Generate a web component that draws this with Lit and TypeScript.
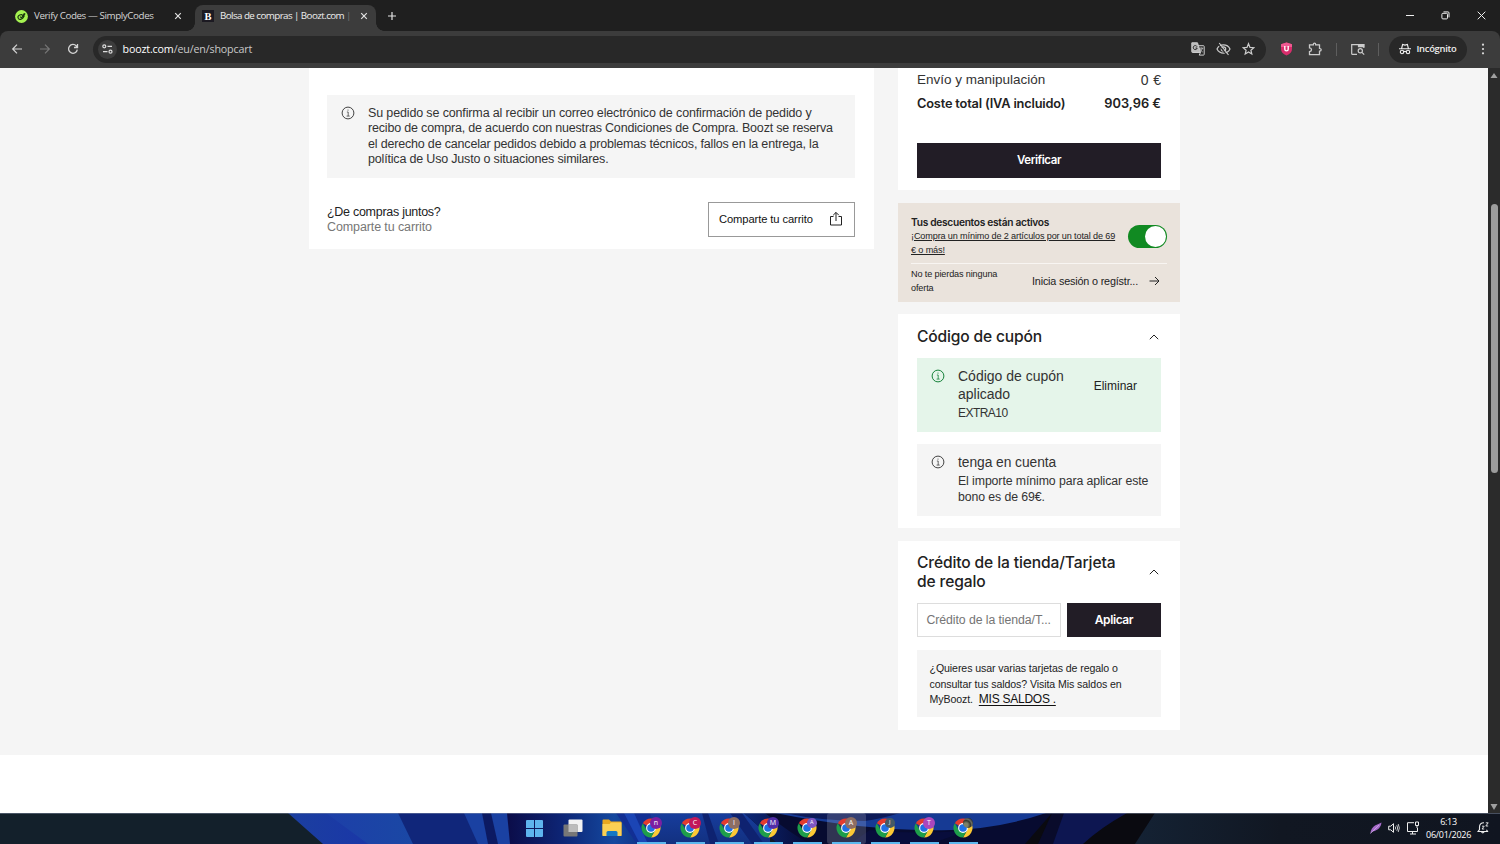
import { LitElement, html, css, svg } from "lit";
import { customElement } from "lit/decorators.js";
import { classMap } from "lit/directives/class-map.js";
import { styleMap } from "lit/directives/style-map.js";

const infoIcon = html`<svg class="info" width="14" height="14" viewBox="0 0 14 14" fill="none" stroke="currentColor"><circle cx="7" cy="7" r="5.900" stroke-width="1"/><path d="M5.900 6h1.300v4M5.600 10.100h3.100" stroke-width=".8"/><circle cx="7" cy="4" r=".6" fill="currentColor" stroke="none"/></svg>`;
const chevron = html`<svg width="10" height="6" viewBox="0 0 10 6" fill="none" stroke="#222" stroke-width="1"><path d="M.8 5.200 5 1l4.200 4.200"/></svg>`;
const closeIcon = html`<svg class="close" width="8" height="8" viewBox="0 0 8 8" fill="none" stroke="#e3e3e3" stroke-width="1.200"><path d="M1.200 1.200l5.600 5.600M6.800 1.200 1.200 6.800"/></svg>`;

interface PinnedApp { letter: string; color: string; small?: boolean; active?: boolean; }
const apps: PinnedApp[] = [
  { letter: "n", color: "#7b1fa2" },
  { letter: "C", color: "#c2185b" },
  { letter: "I", color: "#8d6e63" },
  { letter: "M", color: "#512da8" },
  { letter: "A", color: "#7e57c2", small: true },
  { letter: "A", color: "#8d6e63", active: true },
  { letter: "J", color: "#455a64", small: true },
  { letter: "T", color: "#ab47bc" },
  { letter: "", color: "radial-gradient(circle at 30% 70%, #7c8068 0 20%, #34372f 45%, #6b6f66 60%, #26282a 80%)", small: true },
];

@customElement("app-root")
export class AppRoot extends LitElement {
  static styles = css`
    * { box-sizing: border-box; }
    :host { display: flex; flex-direction: column; width: 1500px; height: 844px; overflow: hidden; font-family: "Liberation Sans", Arial, sans-serif; color: #222; }
    svg { display: block; flex: none; }
    .line { white-space: nowrap; display: block; }

    .tabs { height: 31px; flex: none; background: #1f1f1f; color: #d5d5d5; display: flex; font: 9.800px/14px "Open Sans", sans-serif; letter-spacing: -.41px; }
    .tab { width: 195px; padding: 1px 13px 0 15px; display: flex; align-items: center; }
    .tab .close { margin-left: auto; }
    .tab .line { margin-left: 6px; }
    .active-tab { position: relative; margin-top: 5px; height: 26px; padding: 0 8px 4px 7px; width: 181px; background: #3c3c3c; border-radius: 8px 8px 0 0; color: #eee; letter-spacing: -.57px; }
    .active-tab::before, .active-tab::after { content: ""; position: absolute; bottom: 0; width: 8px; height: 8px; }
    .active-tab::before { left: -8px; background: radial-gradient(circle at 0 0, transparent 7.500px, #3c3c3c 8px); }
    .active-tab::after { right: -8px; background: radial-gradient(circle at 100% 0, transparent 7.500px, #3c3c3c 8px); }
    .fade { color: #777; }
    .new-tab { align-self: center; margin: 1px 0 0 12px; }
    .window { margin-left: auto; display: flex; align-items: center; gap: 27px; padding-right: 14px; }

    .toolbar { height: 37px; flex: none; background: #3c3c3c; display: flex; align-items: center; padding: 0 13px 1px 11px; border-radius: 8px 8px 0 0; }
    .bar-wrap { background: #1f1f1f; flex: none; }
    .nav { display: flex; gap: 16px; }
    .omnibox { margin-left: 14px; width: 1173px; height: 27px; border-radius: 14px; background: #282828; display: flex; align-items: center; padding: 0 11.500px 0 4.500px; }
    .site { width: 19px; height: 19px; border-radius: 50%; background: #3c3c3c; display: grid; place-items: center; }
    .url { margin-left: 6px; font: 10.700px/14px "Open Sans", sans-serif; letter-spacing: -.15px; color: #c9c9c9; }
    .url b { font-weight: 400; color: #fff; }
    .omni-actions { margin-left: auto; display: flex; gap: 11px; }
    .shield { margin-left: 14px; }
    .puzzle { margin-left: 15px; }
    .sep { width: 1px; height: 13px; background: #5e5e5e; margin-left: 13.500px; }
    .side-search { margin-left: 14px; }
    .incognito { height: 27px; width: 78px; border-radius: 14px; background: #282828; margin-left: 9.500px; display: flex; align-items: center; gap: 6px; padding-left: 10px; font: 600 9.400px/14px "Open Sans", sans-serif; letter-spacing: -.28px; color: #eee; }
    .dots { margin-left: auto; }

    .view { height: 745px; flex: none; display: flex; background: #fff; }
    .page { width: 1488px; height: 687px; background: #f5f5f5; display: flex; align-items: flex-start; gap: 24px; padding-left: 309px; }
    .scroll { width: 12px; height: 745px; background: #2b2b2b; display: flex; flex-direction: column; align-items: center; padding: 5px 0 3px; }
    .thumb { width: 7px; height: 269px; border-radius: 4px; background: #9c9c9c; margin: 126px 0 auto; }

    .left { width: 565px; height: 181px; background: #fff; padding: 27px 19px 12px 18px; }
    .notice { height: 83px; background: #f5f5f5; display: flex; padding: 10.500px 0 0 13.500px; gap: 13.500px; color: #333; font-size: 12.500px; line-height: 15.600px; letter-spacing: -.18px; }
    .notice .line:first-child { letter-spacing: -.14px; }
    .notice .info { color: #444; }
    .share { display: flex; justify-content: space-between; margin-top: 24px; }
    .share-text { font-size: 12.500px; line-height: 15.500px; padding-top: 2.500px; letter-spacing: -.28px; }
    .muted { color: #777; letter-spacing: -.11px; }
    .share-btn { width: 147px; height: 35px; border: 1px solid #999; display: flex; align-items: center; justify-content: space-between; padding: 0 11px 1px 10px; font-size: 11.200px; letter-spacing: -.1px; color: #111; }

    .right { width: 282px; display: flex; flex-direction: column; gap: 13px; }
    .summary { height: 122px; background: #fff; padding: 0 19px; }
    .sum-row { display: flex; justify-content: space-between; line-height: 24px; height: 23.500px; font-size: 13.500px; color: #333; }
    .cost { font-size: 14px; letter-spacing: .4px; margin-right: -.4px; }
    .total { font: 600 12.800px/23px Inter, sans-serif; color: #222; }
    .total .line:first-child { letter-spacing: -.18px; }
    .dark { background: #221d26; color: #fff; display: grid; place-items: center; font: 600 11.500px/14px Inter, sans-serif; letter-spacing: -.4px; }
    .verify { height: 34.500px; margin-top: 28px; }

    .promo { height: 98.500px; background: #eae3dc; padding: 11.500px 13px 0; }
    .promo-top { display: flex; justify-content: space-between; height: 49px; border-bottom: 1px solid #f8f5f2; }
    .promo-title { font: 600 10.200px/14px Inter, sans-serif; letter-spacing: -.29px; }
    .small { font-size: 9.100px; line-height: 14px; letter-spacing: -.13px; color: #222; }
    .small u { text-underline-offset: 1px; }
    .toggle { width: 39px; height: 23px; border-radius: 12px; background: #118a22; margin-top: 10px; padding: 1px; display: flex; justify-content: flex-end; }
    .knob { width: 21px; height: 21px; border-radius: 50%; background: #fff; }
    .promo-bottom { display: flex; justify-content: space-between; padding: 3.500px 7px 0 0; }
    .login { display: flex; align-items: center; gap: 11px; height: 28px; font-size: 10.800px; letter-spacing: -.17px; }

    .card { background: #fff; padding: 0 19px; }
    .head { display: flex; justify-content: space-between; align-items: center; padding-right: 2px; font: 500 15.600px/19px Inter, sans-serif; letter-spacing: -.17px; color: #222; }
    .coupon { height: 213.500px; margin-top: -.5px; }
    .coupon .head { height: 44px; padding-top: 1px; }
    .msg { display: flex; padding: 10px 0 0 13.500px; gap: 13.500px; }
    .msg .info { margin-top: 1px; color: #444; }
    .ok { height: 73.500px; background: #e5f5ea; }
    .ok .info { color: #16823a; }
    .note { height: 72px; background: #f5f5f5; margin-top: 12.500px; }
    .msg-title { font-size: 14px; line-height: 17.700px; color: #333; }
    .note .msg-title { font-size: 13.800px; letter-spacing: -.05px; }
    .msg-sub { font-size: 12.300px; line-height: 15.600px; letter-spacing: -.09px; color: #333; margin-top: 2.500px; }
    .code { font-size: 12px; letter-spacing: -.55px; }
    .remove { margin: 10px 24px 0 auto; font-size: 12px; line-height: 16px; color: #222; }
    .credit { height: 189px; }
    .credit .head { height: 62px; letter-spacing: -.13px; }
    .form { display: flex; gap: 6px; height: 34.500px; }
    .field { width: 144px; border: 1px solid #ddd; padding: 0 0 0 8.500px; font-size: 12.300px; line-height: 33px; letter-spacing: -.08px; color: #757575; }
    .apply { width: 94px; padding-top: 1px; font-size: 12px; letter-spacing: -.4px; }
    .balance { height: 67px; margin-top: 12.500px; background: #f5f5f5; padding: 11.500px 12.500px; font-size: 10.600px; line-height: 15.500px; letter-spacing: -.09px; color: #222; }
    .balance u { font-size: 12px; letter-spacing: -.25px; margin-left: 3px; text-underline-offset: 1.500px; color: #111; }

    .taskbar { position: relative; height: 31px; flex: none; background: #111826; overflow: hidden; }
    .wall { position: absolute; inset: 0; }
    .task-row { position: relative; display: flex; height: 31px; padding-left: 514.500px; color: #fff; }
    .slot { width: 39px; height: 31px; display: grid; place-items: center; position: relative; padding-bottom: 1px; }
    .running::after { content: ""; position: absolute; bottom: 0; left: 5px; width: 29px; height: 2px; background: #5cb8ee; }
    .focused { background: #ffffff2b; border-radius: 3px; }
    .badge { position: absolute; left: 18.500px; top: 4px; width: 12px; height: 12px; border-radius: 50%; display: grid; place-items: center; font: 7px/12px "Open Sans", sans-serif; color: #fff; }
    .badge.tiny { left: 19.500px; top: 5px; width: 9.500px; height: 9.500px; font-size: 5.500px; line-height: 9px; }
    .tray { margin-left: auto; display: flex; align-items: center; padding: 0 11px 1px 0; gap: 6px; }
    .clock { font: 9px/13px "Open Sans", sans-serif; letter-spacing: -.28px; text-align: center; }
  `;

  private chrome() {
    return html`<svg width="20" height="20" viewBox="0 0 20 20">
      <path d="M10 10 1.800 5.300A9.400 9.400 0 0 1 18.200 5.300z" fill="#e33b2e"/>
      <path d="M10 5.300h8.200A9.400 9.400 0 0 1 10 19.400L14 12.400z" fill="#fcc934"/>
      <path d="M14 12.400 10 19.400A9.400 9.400 0 0 1 1.800 5.300L6 12.400z" fill="#1e9e4a"/>
      <circle cx="10" cy="10" r="4.900" fill="#fff"/><circle cx="10" cy="10" r="3.800" fill="#1f6fe5"/>
    </svg>`;
  }

  private wallpaper() {
    return svg`<svg class="wall" width="1500" height="31" viewBox="0 0 1500 31">
      <defs>
        <linearGradient id="a"><stop offset="0" stop-color="#1b3f9f"/><stop offset=".45" stop-color="#1a36a8"/><stop offset="1" stop-color="#132a80"/></linearGradient>
        <linearGradient id="b"><stop offset="0" stop-color="#1d3fa8"/><stop offset="1" stop-color="#1a48a4"/></linearGradient>
        <linearGradient id="c"><stop offset="0" stop-color="#0b0c48"/><stop offset=".35" stop-color="#0d2474"/><stop offset=".7" stop-color="#14489f"/><stop offset="1" stop-color="#0c2478"/></linearGradient>
        <linearGradient id="d" x1="0" x2="0" y1="0" y2="1"><stop offset="0" stop-color="#173d9d"/><stop offset="1" stop-color="#123080"/></linearGradient>
        <linearGradient id="e"><stop offset="0" stop-color="#0c2777"/><stop offset="1" stop-color="#070b35"/></linearGradient>
        <linearGradient id="f"><stop offset="0" stop-color="#142234"/><stop offset=".4" stop-color="#111722"/><stop offset="1" stop-color="#101520"/></linearGradient>
      </defs>
      <rect width="330" height="31" fill="#13202b"/>
      <path d="M288 0H480V31H323z" fill="url(#a)"/>
      <path d="M326 0H400L418 31H368z" fill="url(#b)"/>
      <path d="M398 0H470L482 31H413z" fill="#10267a"/>
      <path d="M464 0H512V31H478z" fill="#1a41a2"/>
      <path d="M482 0H491L498 31H488z" fill="#0c1a62"/>
      <path d="M507 0H660V31H510z" fill="url(#c)"/>
      <path d="M616 0H680V31H637z" fill="#122f94"/>
      <path d="M624 0H634L648 31H640z" fill="#1b45b5"/>
      <path d="M650 0H770V31H660z" fill="url(#d)"/>
      <path d="M708 0 719 31H710L702 0zM730 0H742L764 31H752z" fill="#0e2270"/>
      <path d="M744 0H1160V31H778z" fill="#070b30"/>
      <path d="M744 0H765Q790 20 810 31H778z" fill="url(#e)"/>
      <path d="M775 0H1046Q990 19 930 17Q860 17 775 0z" fill="#163a94"/>
      <path d="M785 0H900Q880 6 865 8Q820 8 785 0z" fill="#0d1a58"/>
      <path d="M870 17Q920 22 970 17L930 31H850z" fill="#080d3c"/>
      <path d="M1052 0H1155L1136 31H1025z" fill="#0a0a10"/>
      <path d="M1057 0H1127Q1100 15 1083 31H1045z" fill="#0d1651"/>
      <path d="M1052 0H1064L1053 31H1038z" fill="#090b2b"/>
      <path d="M1155 0H1500V31H1135z" fill="url(#f)"/>
      <rect width="1500" height="1" fill="#8b96ad" opacity=".45"/>
    </svg>`;
  }

  render() {
    return html`
      <div class="tabs">
        <div class="tab">
          <svg width="13" height="13" viewBox="0 0 13 13"><circle cx="6.500" cy="6.500" r="6.400" fill="#a5f251"/><g fill="none" stroke="#17340c" stroke-width="1.100"><ellipse cx="5.600" cy="7" rx="2.700" ry="2.100" transform="rotate(-25 5.600 7)"/><path d="M5 6.700 6.300 7.800 10.200 3.700M8 4.300l2.200-.6M8.300 7.600 9.500 5.500"/></g></svg>
          <span class="line">Verify Codes — SimplyCodes</span>${closeIcon}
        </div>
        <div class="tab active-tab">
          <svg width="12" height="12" viewBox="0 0 12 12"><rect width="12" height="12" fill="#1c1a22"/><text x="6" y="9.700" text-anchor="middle" fill="#fff" font-family="Liberation Serif, serif" font-weight="700" font-size="10.500" letter-spacing="0">B</text></svg>
          <span class="line">Bolsa de compras | Boozt.com <span class="fade">|</span></span>${closeIcon}
        </div>
        <svg class="new-tab" width="8" height="8" viewBox="0 0 8 8" stroke="#e3e3e3" stroke-width="1.200"><path d="M4 0v8M0 4h8"/></svg>
        <div class="window">
          <svg width="8" height="8" viewBox="0 0 8 8" stroke="#eee"><path d="M0 3.500h8"/></svg>
          <svg width="9" height="9" viewBox="0 0 9 9" fill="none" stroke="#eee"><rect x=".9" y="2.300" width="5.600" height="5.600" rx="1"/><path d="M2.500.9H7Q8 .9 8 2V6.400"/></svg>
          <svg width="9" height="9" viewBox="0 0 9 9" stroke="#eee"><path d="M.7.700l7.600 7.600M8.300.7.700 8.300"/></svg>
        </div>
      </div>
      <div class="bar-wrap"><div class="toolbar">
        <div class="nav">
          <svg width="12" height="12" viewBox="0 0 12 12" fill="none" stroke="#d5d5d5" stroke-width="1.200"><path d="M11 6H2M6 1.700 1.700 6 6 10.300"/></svg>
          <svg width="12" height="12" viewBox="0 0 12 12" fill="none" stroke="#777" stroke-width="1.200"><path d="M1 6h9M6 1.700 10.300 6 6 10.300"/></svg>
          <svg width="12" height="12" viewBox="0 0 12 12" fill="none" stroke="#d5d5d5" stroke-width="1.300"><path d="M10.300 6.600A4.400 4.400 0 1 1 9.300 3L10.300 4.200M10.500 1v3.500H7"/></svg>
        </div>
        <div class="omnibox">
          <span class="site"><svg width="11" height="10" viewBox="0 0 11 10" fill="none" stroke="#ddd" stroke-width="1.200"><circle cx="2.300" cy="2.300" r="1.500"/><path d="M5.500 2.300H10M1 7.700h4.500"/><circle cx="8.500" cy="7.700" r="1.500"/></svg></span>
          <span class="line url"><b>boozt.com</b>/eu/en/shopcart</span>
          <div class="omni-actions">
            <svg width="14" height="14" viewBox="0 0 14 14" fill="none" stroke="#ccc"><path d="M.8.800H6.500L9.500 10.500H1.500Q.8 10.500.8 9.800z" fill="#bbb"/><path d="M7 3.700h5.500q.7 0 .7.700v8q0 .7-.7.700H8.200L9.500 10.500"/><path d="M8.300 6.200h4M10.300 5.500v.7M11.500 6.200q-.6 2.300-3 3.600M9 7q.8 2 2.700 3" stroke-width=".8"/><path d="M6 4.600A2 2 0 1 0 6.200 6H4.500" stroke="#282828"/></svg>
            <svg width="15" height="14" viewBox="0 0 15 14" fill="none" stroke="#ccc" stroke-width="1.200"><path d="M1 7Q3 2.900 7.500 2.900T14 7Q12 11.100 7.500 11.100T1 7z"/><circle cx="7.500" cy="7" r="2.200"/><path d="M2 1.800 11.200 13.500" stroke="#282828"/><path d="M3.200 1 12.500 13"/></svg>
            <svg width="13" height="14" viewBox="0 0 13 14" fill="none" stroke="#ccc" stroke-width="1.200"><path d="M6.500 1.700 8 5.400 11.900 5.700 8.900 8.200 9.800 12 6.500 9.900 3.200 12 4.100 8.200 1.100 5.700 5 5.400z"/></svg>
          </div>
        </div>
        <svg class="shield" width="13" height="14" viewBox="0 0 13 14"><path d="M6.500.5 12 2.300V7Q12 11 6.500 13.500 1 11 1 7V2.300z" fill="#d92d6c"/><path d="M6.500.5 12 2.300V5H1V2.300z" fill="#ef5a92"/><path d="M4.800 4v3.200Q4.800 8.900 6.500 8.900T8.200 7.200V4" fill="none" stroke="#fff" stroke-width="1.400"/></svg>
        <svg class="puzzle" width="14" height="14" viewBox="0 0 14 14" fill="none" stroke="#ccc" stroke-width="1.300"><path d="M1.500 2.800H5.300Q5.300 1.100 6.500 1.100T7.700 2.800h3.800V6.300Q13.200 6.500 13.200 7.700T11.500 9.200V12.700H1.500V9.600Q3.500 9.300 3.500 7.700T1.500 5.900z"/></svg>
        <span class="sep"></span>
        <svg class="side-search" width="14" height="13" viewBox="0 0 14 13" fill="none" stroke="#ccc" stroke-width="1.200"><path d="M6 11.300H1.300Q.7 11.300.7 10.700V1.700H12.800V5"/><path d="M7.500 1.700h5.300v2H7.500z" fill="#ccc"/><circle cx="9.300" cy="7.800" r="2.100"/><path d="m10.900 9.400 2.300 2.300"/></svg>
        <span class="sep"></span>
        <div class="incognito"><svg width="12" height="12" viewBox="0 0 12 12" fill="none" stroke="#eee" stroke-width="1.100"><path d="M0 5.700h12M2.600 5.500 3.600 1.500 6 2.100 8.400 1.500 9.400 5.500"/><circle cx="3" cy="9" r="1.700"/><circle cx="9" cy="9" r="1.700"/><path d="M4.700 8.700Q6 8 7.300 8.700"/></svg>Incógnito</div>
        <svg class="dots" width="8" height="12" viewBox="0 0 8 12" fill="#ddd"><circle cx="4" cy="1.700" r="1.100"/><circle cx="4" cy="6" r="1.100"/><circle cx="4" cy="10.300" r="1.100"/></svg>
      </div></div>

      <div class="view">
        <main class="page">
          <section class="left">
            <div class="notice">${infoIcon}
              <div>
                <span class="line">Su pedido se confirma al recibir un correo electrónico de confirmación de pedido y</span>
                <span class="line">recibo de compra, de acuerdo con nuestras Condiciones de Compra. Boozt se reserva</span>
                <span class="line">el derecho de cancelar pedidos debido a problemas técnicos, fallos en la entrega, la</span>
                <span class="line">política de Uso Justo o situaciones similares.</span>
              </div>
            </div>
            <div class="share">
              <div class="share-text"><span class="line">¿De compras juntos?</span><span class="line muted">Comparte tu carrito</span></div>
              <div class="share-btn"><span class="line">Comparte tu carrito</span>
                <svg width="14" height="16" viewBox="0 0 14 16" fill="none" stroke="#222"><path d="M4.500 5.500H1.500v8.500h11V5.500H9.500M7 10V1.500M4.200 4.200 7 1.400 9.800 4.200"/></svg></div>
            </div>
          </section>
          <aside class="right">
            <section class="summary">
              <div class="sum-row"><span class="line">Envío y manipulación</span><span class="line cost">0 €</span></div>
              <div class="sum-row total"><span class="line">Coste total (IVA incluido)</span><span class="line">903,96 €</span></div>
              <div class="dark verify">Verificar</div>
            </section>
            <section class="promo">
              <div class="promo-top">
                <div><span class="line promo-title">Tus descuentos están activos</span>
                  <span class="line small"><u>¡Compra un mínimo de 2 artículos por un total de 69</u></span>
                  <span class="line small"><u>€ o más!</u></span></div>
                <div class="toggle"><div class="knob"></div></div>
              </div>
              <div class="promo-bottom">
                <div class="small"><span class="line">No te pierdas ninguna</span><span class="line">oferta</span></div>
                <div class="login"><span class="line">Inicia sesión o regístr...</span>
                  <svg width="11" height="10" viewBox="0 0 11 10" fill="none" stroke="#222"><path d="M.5 5h9.500M6 1l4 4-4 4"/></svg></div>
              </div>
            </section>
            <section class="card coupon">
              <div class="head"><span class="line">Código de cupón</span>${chevron}</div>
              <div class="msg ok">${infoIcon}
                <div><span class="line msg-title">Código de cupón</span><span class="line msg-title">aplicado</span><span class="line msg-sub code">EXTRA10</span></div>
                <span class="line remove">Eliminar</span>
              </div>
              <div class="msg note">${infoIcon}
                <div><span class="line msg-title">tenga en cuenta</span><div class="msg-sub"><span class="line">El importe mínimo para aplicar este</span><span class="line">bono es de 69€.</span></div></div>
              </div>
            </section>
            <section class="card credit">
              <div class="head"><div><span class="line">Crédito de la tienda/Tarjeta</span><span class="line">de regalo</span></div>${chevron}</div>
              <div class="form"><div class="field line">Crédito de la tienda/T...</div><div class="dark apply">Aplicar</div></div>
              <div class="balance"><span class="line">¿Quieres usar varias tarjetas de regalo o</span><span class="line">consultar tus saldos? Visita Mis saldos en</span><span class="line">MyBoozt. <u>MIS SALDOS .</u></span></div>
            </section>
          </aside>
        </main>
        <div class="scroll">
          <svg width="8" height="5" viewBox="0 0 8 5" fill="#a0a0a0"><path d="M4 0 7.500 5h-7z"/></svg>
          <div class="thumb"></div>
          <svg width="8" height="6" viewBox="0 0 8 6" fill="#a0a0a0"><path d="M.5 0h7L4 6z"/></svg>
        </div>
      </div>

      <div class="taskbar">
        ${this.wallpaper()}
        <div class="task-row">
          <div class="slot"><svg width="17" height="17" viewBox="0 0 17 17"><path d="M0 1Q0 0 1 0H8V8H0zM9 0h7q1 0 1 1V8H9zM0 9h8v8H1q-1 0-1-1zM9 9h8v7q0 1-1 1H9z" fill="#5eb4ee"/></svg></div>
          <div class="slot"><svg width="20" height="18" viewBox="0 0 20 18"><rect x="5.500" y=".5" width="14" height="12.500" rx="1" fill="#f2f2f2"/><rect x=".5" y="5.500" width="14" height="12" rx="1" fill="#777"/><path d="M5.500 5.500h9V13h-9z" fill="#bcbcbc"/></svg></div>
          <div class="slot"><svg width="20" height="18" viewBox="0 0 20 18"><path d="M.5 1.500Q.5.500 1.500.500H7L9 2.500h9.500q1 0 1 1V17H.5z" fill="#e9a820"/><path d="M.5 5H7.500L9 3.500H19.500V16q0 1-1 1H1.500q-1 0-1-1z" fill="#fbd054"/><path d="M4.500 17V13.500q0-1.500 1.500-1.500h8q1.500 0 1.500 1.500V17z" fill="#1577c4"/></svg></div>
          ${apps.map(a => html`<div class=${classMap({ slot: true, running: true, focused: !!a.active })}>${this.chrome()}<span class=${classMap({ badge: true, tiny: !!a.small })} style=${styleMap({ background: a.color })}>${a.letter}</span></div>`)}
          <div class="tray">
            <svg width="12" height="12" viewBox="0 0 12 12"><path d="M.3 11.700Q1 6 5 3.500 8.500 2 11.500.500 11 5 7.500 7.500 4.500 9.500 2 9.700z" fill="#a76bcb"/><path d="M.5 11.500 9 3" stroke="#e1c4f3" stroke-width=".6"/></svg>
            <svg width="12" height="12" viewBox="0 0 12 12" fill="none" stroke="#eee"><path d="M.7 4.200H2.700L5.500 1.700V10.300L2.700 7.800H.7z"/><path d="M7.200 4.500Q8.200 6 7.200 7.500M8.800 3.200Q10.500 6 8.800 8.800M10.200 2Q12.500 6 10.200 10" stroke-width=".8"/></svg>
            <svg width="14" height="14" viewBox="0 0 14 14" fill="none" stroke="#eee"><path d="M8 1.700H1.500V10.500H11.500V7M4 13h6M6.500 10.500V13"/><path d="M9.500 1h3v3.500h-3zM11 4.500V7"/></svg>
            <div class="clock"><span class="line">6:13</span><span class="line">06/01/2026</span></div>
            <svg width="12" height="12" viewBox="0 0 12 12" fill="none" stroke="#eee" stroke-width="1.100"><path d="M7 .8Q2.500.800 2.500 5V7.500L1 9.500H10.500L9.500 7.800M4.500 10q1.300 1.700 2.600 0"/><path d="M5 4.200h2.200L5 7h2.200M8.800.8h2.400L8.800 4h2.400" stroke-width=".9"/></svg>
          </div>
        </div>
      </div>`;
  }
}
